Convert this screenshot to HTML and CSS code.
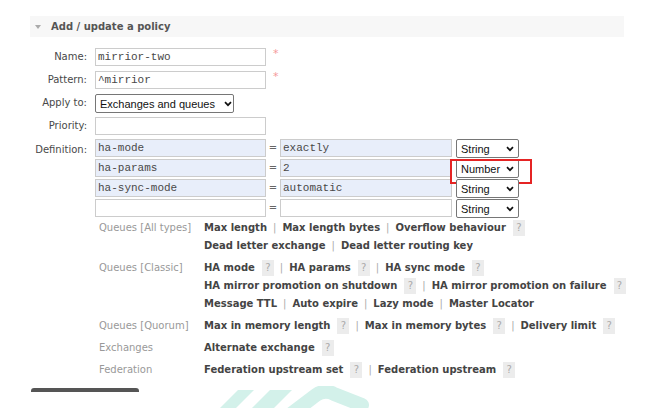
FILE: index.html
```html
<!DOCTYPE html>
<html>
<head>
<meta charset="utf-8">
<link rel="stylesheet" href="styles.css">
</head>
<body>
<div class="section">
  <h2 class="head"><span class="tri"></span>Add / update a policy</h2>
  <div class="form">
    <div class="lbl">Name:</div>
    <div class="field"><input class="txt" value="mirrior-two"><span class="req">*</span></div>

    <div class="lbl">Pattern:</div>
    <div class="field"><input class="txt" value="^mirrior"><span class="req">*</span></div>

    <div class="lbl">Apply to:</div>
    <div class="field">
      <span class="sel sel-apply"><select><option>Exchanges and queues</option></select><svg class="chev" width="8" height="6" viewBox="0 0 8 6"><path d="M1 1.2 L4 4.2 L7 1.2" fill="none" stroke="#111" stroke-width="1.7"/></svg></span>
    </div>

    <div class="lbl">Priority:</div>
    <div class="field"><input class="txt" value=""></div>

    <div class="lbl lbl-def">Definition:</div>
    <div class="defs">
      <input class="txt key" value="ha-mode"><span class="eq">=</span><input class="txt val key" value="exactly">
      <span class="sel sel-type"><select><option>String</option></select><svg class="chev" width="8" height="6" viewBox="0 0 8 6"><path d="M1 1.2 L4 4.2 L7 1.2" fill="none" stroke="#111" stroke-width="1.7"/></svg></span>

      <input class="txt key" value="ha-params"><span class="eq">=</span><input class="txt val key" value="2">
      <span class="sel sel-type marked"><select><option>Number</option></select><svg class="chev" width="8" height="6" viewBox="0 0 8 6"><path d="M1 1.2 L4 4.2 L7 1.2" fill="none" stroke="#111" stroke-width="1.7"/></svg></span>

      <input class="txt key" value="ha-sync-mode"><span class="eq">=</span><input class="txt val key" value="automatic">
      <span class="sel sel-type"><select><option>String</option></select><svg class="chev" width="8" height="6" viewBox="0 0 8 6"><path d="M1 1.2 L4 4.2 L7 1.2" fill="none" stroke="#111" stroke-width="1.7"/></svg></span>

      <input class="txt" value=""><span class="eq">=</span><input class="txt val" value="">
      <span class="sel sel-type"><select><option>String</option></select><svg class="chev" width="8" height="6" viewBox="0 0 8 6"><path d="M1 1.2 L4 4.2 L7 1.2" fill="none" stroke="#111" stroke-width="1.7"/></svg></span>
    </div>
  </div>

  <div class="help">
    <div class="grp">
      <div class="glbl">Queues [All types]</div>
      <div class="lines">
        <div class="line">Max length<span class="sep">|</span>Max length bytes<span class="sep">|</span>Overflow behaviour<span class="q">?</span></div>
        <div class="line">Dead letter exchange<span class="sep">|</span>Dead letter routing key</div>
      </div>
    </div>
    <div class="grp">
      <div class="glbl">Queues [Classic]</div>
      <div class="lines">
        <div class="line">HA mode<span class="q">?</span><span class="sep">|</span>HA params<span class="q">?</span><span class="sep">|</span>HA sync mode<span class="q">?</span></div>
        <div class="line">HA mirror promotion on shutdown<span class="q">?</span><span class="sep">|</span>HA mirror promotion on failure<span class="q">?</span></div>
        <div class="line">Message TTL<span class="sep">|</span>Auto expire<span class="sep">|</span>Lazy mode<span class="sep">|</span>Master Locator</div>
      </div>
    </div>
    <div class="grp">
      <div class="glbl">Queues [Quorum]</div>
      <div class="lines">
        <div class="line">Max in memory length<span class="q">?</span><span class="sep">|</span>Max in memory bytes<span class="q">?</span><span class="sep">|</span>Delivery limit<span class="q">?</span></div>
      </div>
    </div>
    <div class="grp">
      <div class="glbl">Exchanges</div>
      <div class="lines">
        <div class="line">Alternate exchange<span class="q">?</span></div>
      </div>
    </div>
    <div class="grp">
      <div class="glbl">Federation</div>
      <div class="lines">
        <div class="line">Federation upstream set<span class="q">?</span><span class="sep">|</span>Federation upstream<span class="q">?</span></div>
      </div>
    </div>
  </div>
  <div class="btnbar"></div>
</div>

<svg class="watermark" width="160" height="24" viewBox="214 386 160 24">
  <polygon points="218,410 238,390 254,390 234,410" fill="#d3f1ea"/>
  <polygon points="250,410 270,390 292,390 272,410" fill="#d3f1ea"/>
  <path d="M291 414 L316 395 Q325 389 334 394 L362 405" fill="none" stroke="#d3f1ea" stroke-width="14" stroke-linecap="round" stroke-linejoin="round"/>
</svg>
</body>
</html>
```

FILE: styles.css
```css
* { box-sizing: border-box; }

body {
  margin: 0;
  height: 408px;
  overflow: hidden;
  position: relative;
  background: #fff;
  font-family: "DejaVu Sans", Verdana, sans-serif;
  font-size: 10px;
  color: #484848;
}

.section {
  margin-left: 30px;
  width: 594px;
  padding-top: 16px;
}

.head {
  margin: 0;
  height: 21px;
  background: #f7f7f7;
  display: flex;
  align-items: center;
  padding-left: 5px;
  font-size: 10px;
  font-weight: bold;
  color: #555;
}

.tri {
  width: 0;
  height: 0;
  border-left: 3.5px solid transparent;
  border-right: 3.5px solid transparent;
  border-top: 4px solid #aaa;
  margin-right: 10px;
}

.form {
  display: grid;
  grid-template-columns: 57px auto;
  column-gap: 8px;
  row-gap: 5px;
  margin-top: 11px;
  align-items: start;
}

.lbl {
  text-align: right;
  line-height: 18px;
  white-space: nowrap;
}

.lbl-def {
  margin-top: 0;
  line-height: 20px;
}

.field {
  display: flex;
  align-items: flex-start;
  height: 18px;
}

.txt {
  width: 171px;
  height: 18px;
  margin: 0;
  border: 1px solid #ccc;
  padding: 0 2px;
  background: #fff;
  font-family: "Liberation Mono", "Courier New", monospace;
  font-size: 11px;
  color: #484848;
  outline: none;
}

.req {
  color: #f59a9a;
  font-size: 11px;
  line-height: 12px;
  margin-left: 7px;
}

.sel {
  position: relative;
  display: inline-block;
}

.sel select {
  appearance: none;
  -webkit-appearance: none;
  margin: 0;
  height: 19px;
  border: 1px solid #767676;
  border-radius: 2px;
  background: #fff;
  padding: 0 0 0 4px;
  font-family: "Liberation Sans", Arial, sans-serif;
  font-size: 11px;
  color: #111;
  outline: none;
}

.sel .chev {
  position: absolute;
  top: 7px;
  pointer-events: none;
}

.sel-apply select { width: 139px; }
.sel-apply .chev { right: 2px; }

.defs {
  display: grid;
  grid-template-columns: 171px 14px 172px 67px;
  grid-auto-rows: 19px;
  row-gap: 1px;
  margin-top: -1px;
  align-items: start;
}

.defs .key { background: #e8eefa; }

.val { width: 172px; }

.eq {
  text-align: center;
  line-height: 18px;
  color: #666;
}

.sel-type { justify-self: end; }
.sel-type select { width: 63px; }
.sel-type .chev { right: 5px; }

.marked::after {
  content: "";
  position: absolute;
  left: -6px;
  top: 0;
  width: 78px;
  height: 21px;
  border: 2px solid #e52424;
}

.help {
  margin: 1px 0 0 69px;
}

.grp {
  display: grid;
  grid-template-columns: 105px 1fr;
  line-height: 18px;
  margin-top: 4px;
}

.grp:first-child { margin-top: 0; }

.glbl {
  color: #999;
  white-space: nowrap;
}

.line {
  white-space: nowrap;
  font-weight: bold;
  color: #444;
}

.q {
  display: inline-block;
  width: 12px;
  height: 16px;
  line-height: 16px;
  margin-left: 7px;
  text-align: center;
  vertical-align: middle;
  background: #ececec;
  color: #aaa;
  font-weight: normal;
  font-size: 10px;
}

.sep {
  margin: 0 6px;
  color: #aaa;
  font-weight: normal;
}

.btnbar {
  margin: 9px 0 0 1px;
  width: 108px;
  height: 4px;
  background: #555;
  border-radius: 3px 3px 0 0;
}

.watermark {
  position: absolute;
  left: 214px;
  top: 386px;
}
```
